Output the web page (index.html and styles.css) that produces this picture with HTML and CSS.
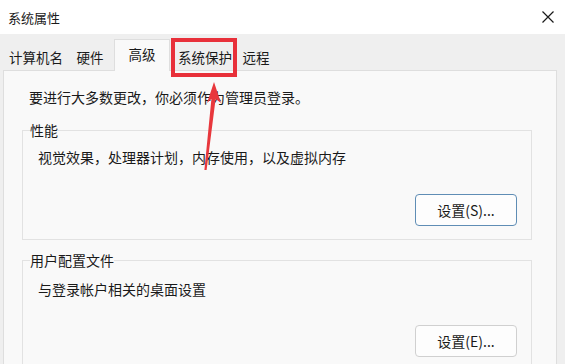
FILE: index.html
```html
<!DOCTYPE html>
<html lang="zh-CN">
<head>
    <meta charset="UTF-8">
    <title>系统属性</title>
    <link rel="stylesheet" href="styles.css">
</head>
<body>
    <div class="titlebar">
        <span class="title">系统属性</span>
        <svg class="close" width="12" height="12" viewBox="0 0 12 12">
            <path d="M0.5 0.5 L11.5 11.5 M11.5 0.5 L0.5 11.5" stroke="#1a1a1a" stroke-width="1.2" fill="none"/>
        </svg>
    </div>

    <div class="main">
        <div class="tabs">
            <div class="tab t1">计算机名</div>
            <div class="tab t2">硬件</div>
            <div class="tab active">高级</div>
            <div class="tab t4">系统保护</div>
            <div class="tab t5">远程</div>
        </div>

        <div class="panel">
            <p class="intro">要进行大多数更改，你必须作为管理员登录。</p>

            <fieldset class="group perf">
                <legend>性能</legend>
                <p class="desc">视觉效果，处理器计划，内存使用，以及虚拟内存</p>
                <div class="actions"><button class="btn default">设置(S)...</button></div>
            </fieldset>

            <fieldset class="group profile">
                <legend>用户配置文件</legend>
                <p class="desc">与登录帐户相关的桌面设置</p>
                <div class="actions"><button class="btn">设置(E)...</button></div>
            </fieldset>
        </div>
    </div>

    <!-- annotation: red box and arrow -->
    <div class="mark"></div>
    <svg class="arrow" width="565" height="364" viewBox="0 0 565 364">
        <polygon points="214,82 221,103 215.6,99 206.6,170 204.4,170 211.4,99 207,103" fill="#e8383d"/>
    </svg>
</body>
</html>
```

FILE: styles.css
```css
body {
    margin: 0;
    width: 565px;
    height: 364px;
    overflow: hidden;
    background: #efefef;
    font-family: "Noto Sans CJK SC", "Microsoft YaHei", sans-serif;
    font-size: 14px;
    color: #1a1a1a;
    position: relative;
}
.titlebar {
    height: 34px;
    background: #ffffff;
    display: flex;
    align-items: center;
    justify-content: space-between;
    padding: 0 11px 0 8px;
}
.title {
    font-size: 13px;
}
.main {
    padding: 6px 0 0 3px;
}
.tabs {
    display: flex;
    align-items: flex-end;
    height: 30px;
    padding-left: 1px;
    font-size: 13.5px;
}
.tab {
    height: 26px;
    line-height: 26px;
    text-align: center;
    background: #efefef;
}
.t1 { width: 64px; }
.t2 { width: 44px; }
.t4 { width: 66px; }
.t5 { width: 36px; }
.tab.active {
    width: 54px;
    height: 31px;
    line-height: 29px;
    margin: 0 2px -1px 2px;
    background: #f9f9f9;
    border: 1px solid #dedede;
    border-bottom: none;
    position: relative;
    z-index: 1;
}
.panel {
    width: 554px;
    height: 300px;
    background: #f9f9f9;
    border: 1px solid #dedede;
    padding: 0 0 0 18px;
    box-sizing: border-box;
}
.intro {
    margin: 16px 0 13px 7px;
    line-height: 20px;
}
.group {
    width: 510px;
    box-sizing: border-box;
    margin: 0;
    padding: 0 14px 13px 14px;
    border: 1px solid #e2e2e2;
}
.group legend {
    line-height: 20px;
    padding: 0;
    margin-left: -7px;
}
.desc {
    margin: 7px 0 0 1px;
    line-height: 20px;
}
.perf .actions {
    margin-top: 27px;
}
.profile {
    margin-top: 10px;
}
.profile .desc {
    margin-top: 9px;
}
.profile .actions {
    margin-top: 26px;
}
.actions {
    display: flex;
    justify-content: flex-end;
}
.btn {
    width: 102px;
    height: 32px;
    font-family: inherit;
    font-size: 14px;
    color: #1a1a1a;
    background: #fdfdfd;
    border: 1px solid #d0d0d0;
    border-radius: 4px;
    padding: 0;
}
.btn.default {
    border-color: #5f8db5;
}
.mark {
    position: absolute;
    left: 171px;
    top: 38px;
    width: 58px;
    height: 31px;
    border: 4px solid #e8303a;
}
.arrow {
    position: absolute;
    left: 0;
    top: 0;
}
```
